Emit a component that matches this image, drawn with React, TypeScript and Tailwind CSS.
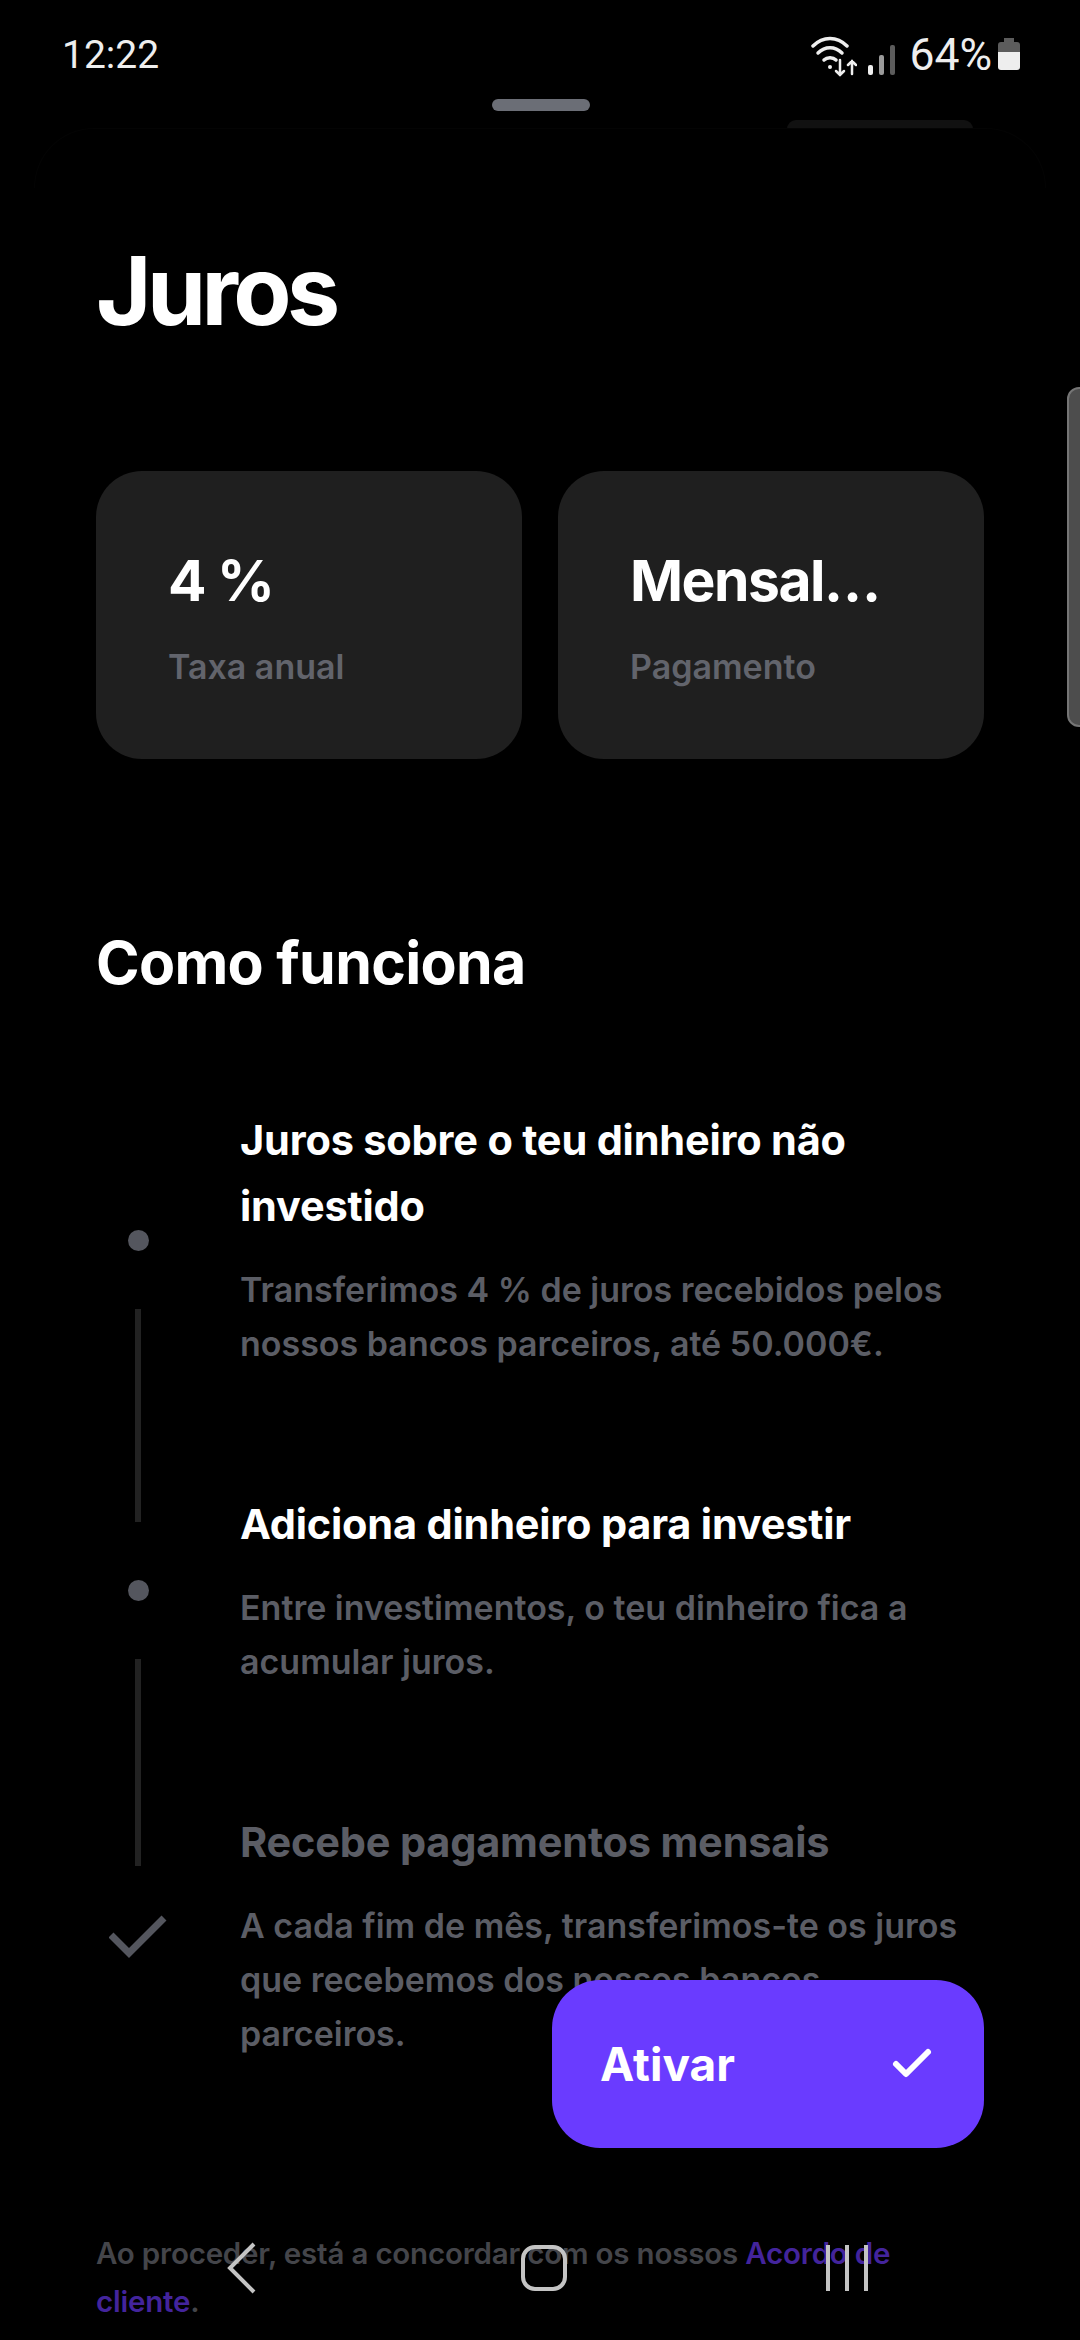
import { Check } from "lucide-react";

const font = "font-['Inter',sans-serif]";

interface StepProps {
    title: string;
    description: string;
    muted?: boolean;
}
const Step = ({ title, description, muted }: StepProps) => (
    <div>
        <h3 className={`text-[41.5px] font-bold leading-[66px] tracking-[-0.2px] ${muted ? "text-[#5b5d65]" : "text-white"}`}>
            {title}
        </h3>
        <p className="mt-[24px] text-[34px] font-semibold leading-[54px] text-[#5b5d65]">{description}</p>
    </div>
);

const StatCard = ({ value, label }: { value: string; label: string }) => (
    <div className="h-[288px] w-[426px] rounded-[46px] bg-[#1f1f1f] pl-[72px] pt-[76px]">
        <div className="text-[57px] font-bold leading-[68px] tracking-[-1.5px] text-white">{value}</div>
        <div className="mt-[30px] text-[34px] font-semibold leading-[44px] text-[#62646c]">{label}</div>
    </div>
);

const StatusBar = () => (
    <div className="flex h-[78px] items-end justify-between pl-[62px] pr-[60px] font-['Roboto',sans-serif] text-[39px] leading-[46px] text-[#eeeeee]">
        <span>12:22</span>
        <div className="flex items-center">
            <svg width="46" height="46" viewBox="0 0 46 46" fill="none" stroke="#eeeeee" strokeLinecap="round">
                <path d="M2 14C12 4 26 4 36 14" strokeWidth="3.5" />
                <path d="M7 21C14 14 24 14 31 21" strokeWidth="3.5" />
                <path d="M13 28C16 25 22 25 25 28" strokeWidth="3.5" />
                <circle cx="19" cy="35" r="2" fill="#eeeeee" stroke="none" />
                <path d="M29 28V43M25 39L29 43L33 39" strokeWidth="2.5" />
                <path d="M41 42V29M37 33L41 29L45 33" strokeWidth="2.5" />
            </svg>
            <svg width="28" height="46" viewBox="0 0 28 46" className="ml-[10px]">
                <rect x="1" y="33" width="5" height="10" rx="2" fill="#eeeeee" />
                <rect x="12" y="23" width="5" height="20" rx="2" fill="#9a9a9a" />
                <rect x="23" y="13" width="5" height="30" rx="2" fill="#5c5c5c" />
            </svg>
            <span className="ml-[14px] text-[44.5px]">64%</span>
            <svg width="22" height="34" viewBox="0 0 22 34" className="ml-[6px]">
                <path d="M6 0H16V4H19Q22 4 22 7V14H0V7Q0 4 3 4H6Z" fill="#5c5c5c" />
                <path d="M0 14H22V29Q22 32 19 32H3Q0 32 0 29Z" fill="#eeeeee" />
            </svg>
        </div>
    </div>
);

export default function App() {
    return (
        <div className={`relative h-[2340px] w-[1080px] overflow-hidden bg-black ${font}`}>
            <StatusBar />

            <div className="relative h-[51px]">
                <div className="absolute left-[492px] top-[21px] h-[12px] w-[98px] rounded-[6px] bg-[#6b6e76]" />
                <div className="absolute left-[787px] top-[42px] h-[9px] w-[186px] rounded-t-[24px] bg-[#111111]" />
                <div className="absolute left-[34px] top-[50px] h-[60px] w-[1012px] rounded-t-[70px] border-x border-t border-[#040404]" />
            </div>

            <main className="px-[96px]">
                <h1 className="mt-[104px] text-[95px] font-bold leading-[116px] tracking-[-4.6px] text-white">Juros</h1>

                <div className="mt-[122px] flex gap-[36px]">
                    <StatCard value="4 %" label="Taxa anual" />
                    <StatCard value="Mensal…" label="Pagamento" />
                </div>

                <h2 className="mt-[169px] text-[59px] font-bold leading-[70px] tracking-[-0.7px] text-white">Como funciona</h2>

                <div className="mt-[109px] flex">
                    <div className="flex w-[144px] shrink-0 flex-col pt-[123px]">
                        <div className="ml-[32px] h-[21px] w-[21px] rounded-full bg-[#54565e]" />
                        <div className="ml-[39px] mt-[58px] h-[213px] w-[6px] bg-[#222222]" />
                        <div className="ml-[32px] mt-[58px] h-[21px] w-[21px] rounded-full bg-[#54565e]" />
                        <div className="ml-[39px] mt-[58px] h-[207px] w-[6px] bg-[#222222]" />
                        <svg width="58" height="44" viewBox="0 0 58 44" className="ml-[13px] mt-[49px]" fill="none" stroke="#54565e" strokeWidth="7">
                            <path d="M2 20L20 38L55 3" />
                        </svg>
                    </div>
                    <div className="flex flex-col gap-[120px]">
                        <Step
                            title="Juros sobre o teu dinheiro não investido"
                            description="Transferimos 4 % de juros recebidos pelos nossos bancos parceiros, até 50.000€."
                        />
                        <Step
                            title="Adiciona dinheiro para investir"
                            description="Entre investimentos, o teu dinheiro fica a acumular juros."
                        />
                        <Step
                            muted
                            title="Recebe pagamentos mensais"
                            description="A cada fim de mês, transferimos-te os juros que recebemos dos nossos bancos parceiros."
                        />
                    </div>
                </div>

                <p className="mt-[168px] text-[29.5px] font-semibold leading-[48px] tracking-[-0.2px] text-[#44454a]">
                    Ao proceder, está a concordar com os nossos <span className="text-[#43249c]">Acordo de cliente</span>.
                </p>
            </main>

            {/* floating button */}
            <button className="absolute left-[552px] top-[1980px] flex h-[168px] w-[432px] items-center justify-between rounded-[48px] bg-[#6a3bff] pl-[48px] pr-[48px] text-[46px] font-bold text-white">
                <span>Ativar</span>
                <Check size={48} strokeWidth={3} />
            </button>

            {/* scroll handle */}
            <div className="absolute left-[1067px] top-[387px] h-[340px] w-[24px] rounded-[12px] border-2 border-[#757575] bg-[#4d4d4d]" />

            {/* android nav */}
            <svg width="60" height="52" viewBox="0 0 60 52" fill="none" stroke="#c4c4c4" strokeWidth="4" className="absolute left-[212px] top-[2242px]">
                <path d="M42 2L18 26L42 50" />
            </svg>
            <div className="absolute left-[521px] top-[2245px] h-[46px] w-[46px] rounded-[14px] border-[4px] border-[#c4c4c4]" />
            <div className="absolute left-[826px] top-[2245px] flex h-[46px] w-[42px] justify-between">
                <div className="w-[4px] bg-[#c4c4c4]" />
                <div className="w-[4px] bg-[#c4c4c4]" />
                <div className="w-[4px] bg-[#c4c4c4]" />
            </div>
        </div>
    );
}
